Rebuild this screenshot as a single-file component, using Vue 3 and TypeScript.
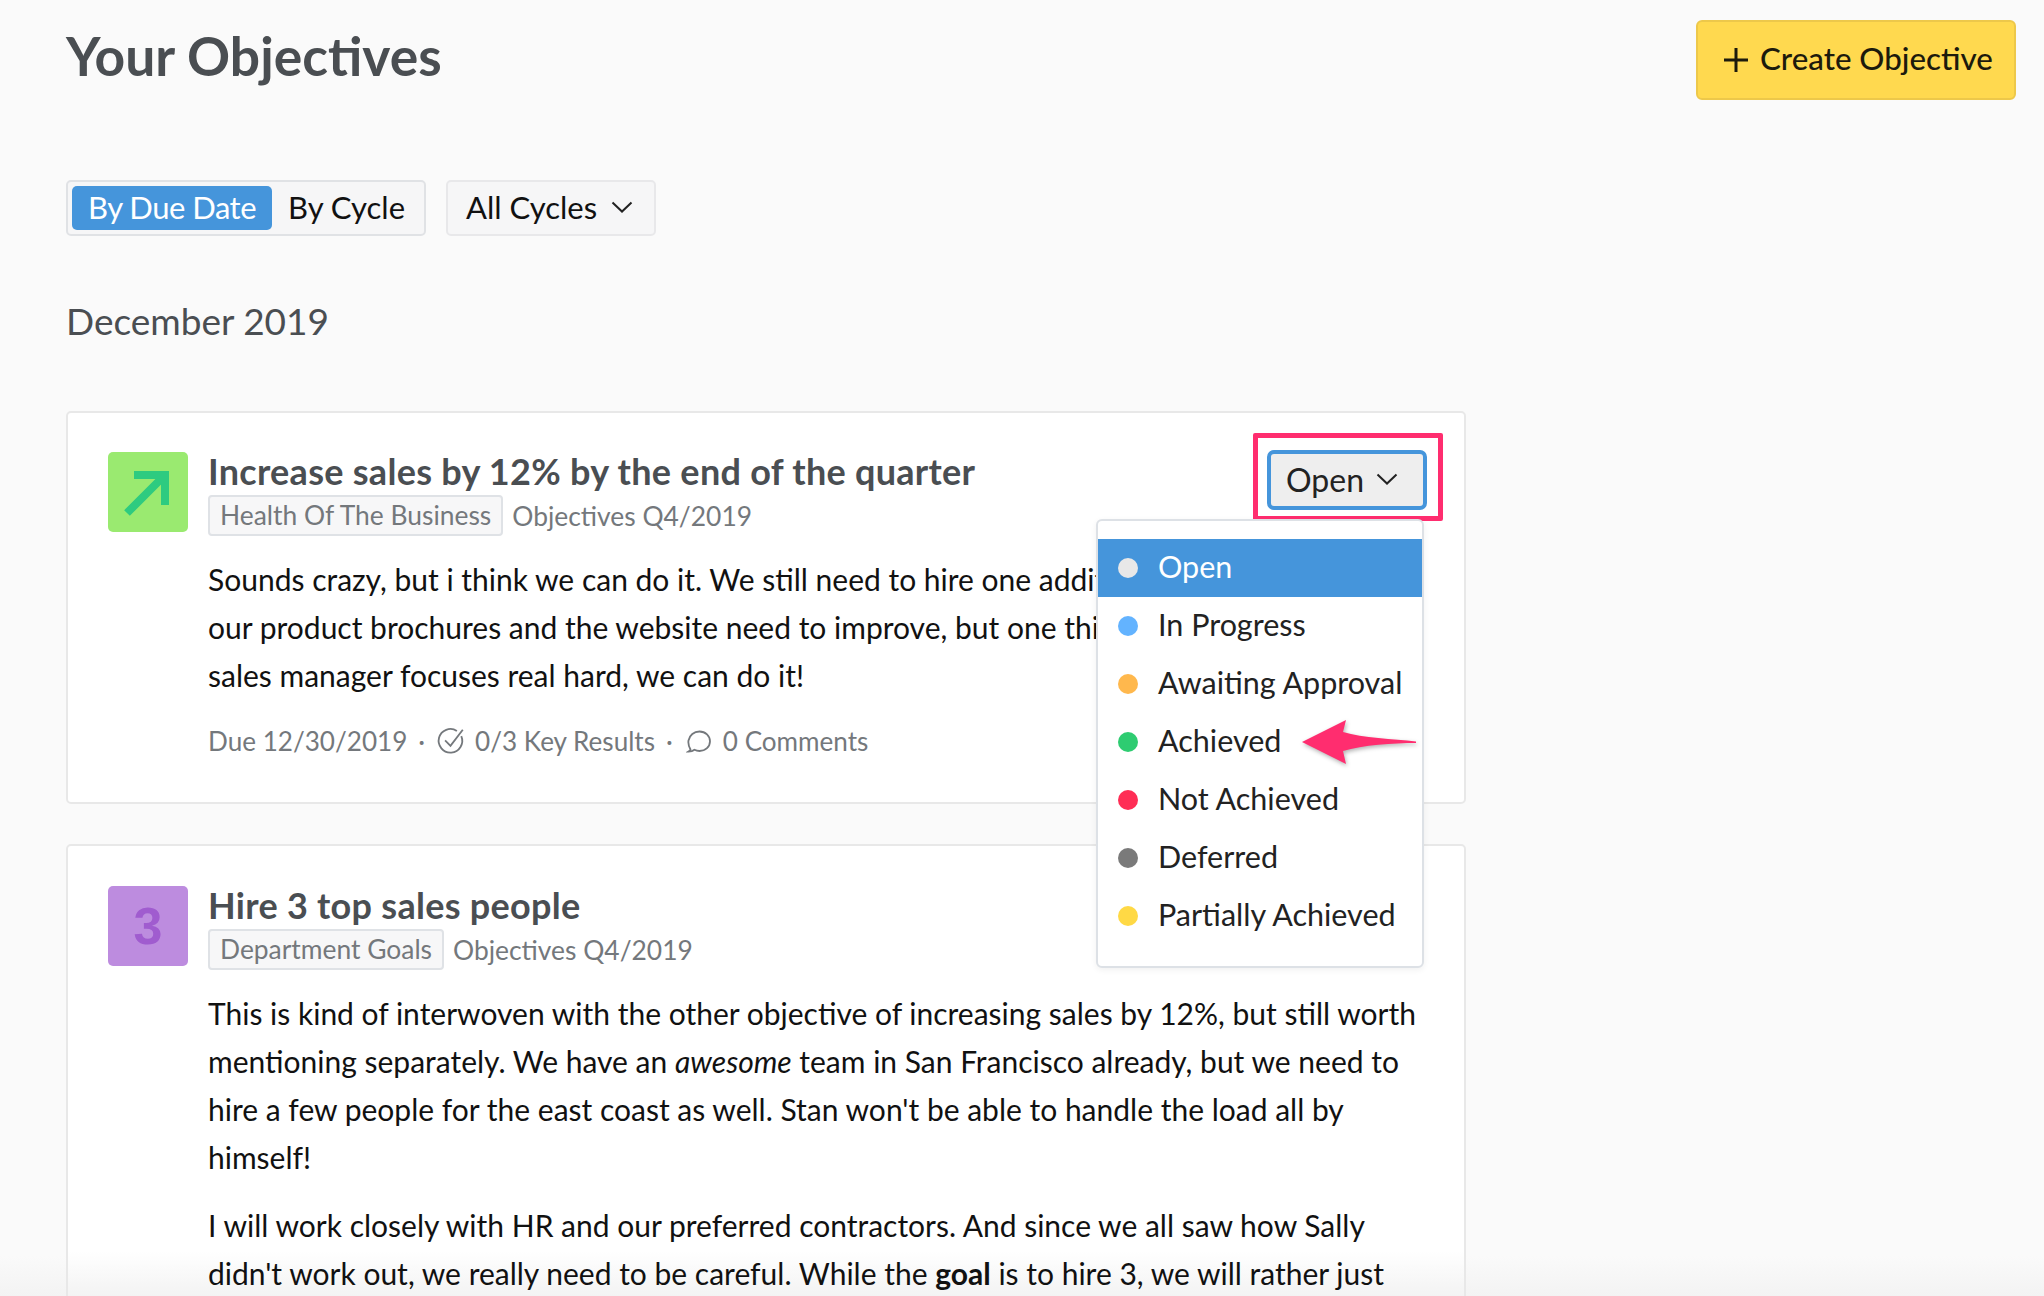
<script setup lang="ts">
const statuses = [
  { label: 'Open', color: '#e8e8e8', active: true },
  { label: 'In Progress', color: '#63b3ff', active: false },
  { label: 'Awaiting Approval', color: '#ffb84d', active: false },
  { label: 'Achieved', color: '#2ecc71', active: false },
  { label: 'Not Achieved', color: '#ff2d55', active: false },
  { label: 'Deferred', color: '#7a7a7a', active: false },
  { label: 'Partially Achieved', color: '#ffd945', active: false },
]
</script>

<template>
  <div class="page">
    <header class="top">
      <h1>Your Objectives</h1>
      <button class="create">
        <svg width="24" height="24" viewBox="0 0 24 24"><path d="M12 0v24M0 12h24" stroke="#1c1a0c" stroke-width="3" fill="none" /></svg>
        <span>Create Objective</span>
      </button>
    </header>

    <div class="filters">
      <div class="toggle">
        <span class="seg on">By Due Date</span>
        <span class="seg">By Cycle</span>
      </div>
      <div class="cycles">
        <span>All Cycles</span>
        <svg width="22" height="12" viewBox="0 0 22 12"><path d="M1.500 1.500L11 10.500L20.500 1.500" stroke="#222" stroke-width="2" fill="none" /></svg>
      </div>
    </div>

    <h2>December 2019</h2>

    <section class="card first">
      <div class="head">
        <div class="badge green">
          <svg width="80" height="80" viewBox="0 0 80 80"><path d="M26 23H57V53M57 23L19 61" stroke="#2ecb80" stroke-width="8" fill="none" /></svg>
        </div>
        <div class="heading">
          <h3>Increase sales by 12% by the end of the quarter</h3>
          <div class="tags"><span class="tag">Health Of The Business</span><span class="cycle">Objectives Q4/2019</span></div>
        </div>
      </div>
      <div class="content">
        <p class="body">Sounds crazy, but i think we can do it. We still need to hire one additional<br>our product brochures and the website need to improve, but one thing<br>sales manager focuses real hard, we can do it!</p>
        <div class="meta">
          <span>Due 12/30/2019</span><i>·</i>
          <svg class="check" width="30" height="30" viewBox="0 0 28 28" fill="none" stroke="#74787c" stroke-width="1.700"><path d="M23.600 9.500A11 11 0 1 1 19.500 4.600" /><path d="M8.500 13.500L13.500 18.500L25 3.500" /></svg>
          <span>0/3 Key Results</span><i class="wide">·</i>
          <svg class="bubble" width="26" height="26" viewBox="0 0 26 26" fill="none" stroke="#74787c" stroke-width="1.800"><path d="M4.500 21.500C2.500 18 2 15.500 2.500 12.500C3.500 7 8 3.500 13.500 3.500C19.500 3.500 24 8 24 13.300C24 18.800 19.500 23 13.500 23C11.500 23 10 22.600 8.500 21.800C7 23 4.800 23.600 2.500 23.600C3.500 23 4.200 22.300 4.500 21.500Z" /></svg>
          <span>0 Comments</span>
        </div>
      </div>

      <div class="open-btn">
        <span>Open</span>
        <svg width="22" height="12" viewBox="0 0 22 12"><path d="M1.500 1.500L11 10.500L20.500 1.500" stroke="#222" stroke-width="2" fill="none" /></svg>
      </div>
      <div class="open-mark"></div>
      <ul class="menu">
        <li v-for="s in statuses" :key="s.label" :class="{ on: s.active }">
          <b class="dot" :style="{ background: s.color }"></b><span>{{ s.label }}</span>
        </li>
      </ul>
      <svg class="pointer" width="118" height="48" viewBox="0 0 118 48">
        <path d="M1 23L45 1L42 13C62 19 92 20 115 22.500V24C92 24 62 26 42 32L45 45Z" fill="#ff2d6f" />
      </svg>
    </section>

    <section class="card">
      <div class="head">
        <div class="badge purple">3</div>
        <div class="heading">
          <h3>Hire 3 top sales people</h3>
          <div class="tags"><span class="tag">Department Goals</span><span class="cycle">Objectives Q4/2019</span></div>
        </div>
      </div>
      <div class="content">
        <p class="body">This is kind of interwoven with the other objective of increasing sales by 12%, but still worth<br>mentioning separately. We have an <em>awesome</em> team in San Francisco already, but we need to<br>hire a few people for the east coast as well. Stan won't be able to handle the load all by<br>himself!</p>
        <p class="body second">I will work closely with HR and our preferred contractors. And since we all saw how Sally<br>didn't work out, we really need to be careful. While the <strong>goal</strong> is to hire 3, we will rather just</p>
      </div>
    </section>
  </div>
</template>

<style>
html, body { margin: 0; background: #fafafa; overflow: hidden; }
</style>

<style scoped>
.page {
  position: relative;
  box-sizing: border-box;
  height: 1296px;
  overflow: hidden;
  padding: 20px 28px 0 66px;
  background: linear-gradient(#fafafa 1256px, #f3f3f3 1296px);
  font-family: Lato, "Open Sans", sans-serif;
  color: #111;
}
.top { display: flex; justify-content: space-between; align-items: flex-start; }
h1 { margin: 5px 0 0; font-size: 53.400px; line-height: 60px; font-weight: 700; color: #4a4e52; }
.create {
  display: flex; align-items: center; gap: 12px;
  box-sizing: border-box; width: 320px; height: 80px; padding: 0 0 5px 26px;
  background: #ffd94f; border: 2px solid #edc84a; border-radius: 6px;
  font: 500 31.300px Lato, sans-serif; color: #1c1a0c;
}
.create svg { margin-top: 5px; }
.filters { display: flex; gap: 20px; margin-top: 80px; font-size: 31px; white-space: nowrap; }
.toggle, .cycles {
  box-sizing: border-box; height: 56px; display: flex; align-items: center;
  background: #f6f6f7; border: 2px solid #e0e2e5; border-radius: 5px;
}
.toggle { width: 360px; padding: 0 4px; }
.seg { display: flex; align-items: center; height: 44px; padding: 0 16px 2px; box-sizing: border-box; }
.seg.on { width: 200px; background: #4595db; color: #fff; border-radius: 5px; letter-spacing: -.5px; }
.cycles { width: 210px; padding: 0 0 2px 18px; gap: 14px; border-color: #e8e8ea; }
h2 { margin: 63px 0 0; font-size: 37px; line-height: 44px; font-weight: 400; color: #4a4e52; }
.card {
  position: relative; box-sizing: border-box; width: 1400px; padding: 39px 40px 40px 40px;
  background: #fff; border: 2px solid #e8e8e8; border-radius: 5px; margin-bottom: 40px;
}
.card:last-child {
  height: 600px;
  padding-top: 40px;
  background: linear-gradient(#fff 405px, #f3f3f3 450px);
}
.first { margin-top: 68px; height: 393px; }
.head { display: flex; gap: 20px; }
.badge { width: 80px; height: 80px; flex: none; border-radius: 5px; }
.green { background: #9aea70; }
.purple {
  display: flex; align-items: center; justify-content: center;
  background: #bd8cdf; color: #a05ccf;
  font: 700 52px "Liberation Sans", sans-serif;
}
h3 { margin: -1px 0 0; font-size: 36px; line-height: 40px; font-weight: 700; letter-spacing: .28px; color: #4a4e52; }
.tags { display: flex; align-items: center; gap: 9px; margin-top: 4px; font-size: 26.400px; color: #74787c; }
.tag {
  display: block; box-sizing: border-box; height: 41px; line-height: 37px; padding: 0 10px;
  background: #f7f7f8; border: 2px solid #dfe2e6; border-radius: 4px;
}
.content { padding-left: 100px; }
.body { margin: 19px 0 0; font-size: 30px; line-height: 48px; color: #111; white-space: nowrap; }
.second { margin-top: 20px; }
.meta { display: flex; align-items: center; margin-top: 25px; font-size: 26.100px; line-height: 34px; color: #74787c; white-space: nowrap; }
.meta i { font-style: normal; margin: 0 11px; }
.meta i.wide { margin-right: 13px; }
.meta svg { margin-right: 9px; }
.meta .bubble { margin-right: 11px; }
.open-btn {
  position: absolute; left: 1199px; top: 37px; box-sizing: border-box; width: 160px; height: 60px;
  display: flex; align-items: center; gap: 12px; padding: 0 0 2px 15px;
  background: #eee; border: 4px solid #4595db; border-radius: 7px; font-size: 32px; color: #222;
}
.open-mark {
  position: absolute; left: 1185px; top: 20px; box-sizing: border-box; width: 190px; height: 88px;
  border: 5px solid #ff2d6f; border-radius: 2px;
}
.menu {
  position: absolute; left: 1028px; top: 106px; box-sizing: border-box; width: 328px; height: 449px;
  margin: 0; padding: 18px 0; list-style: none; z-index: 2;
  background: #fff; border: 2px solid #dde1e6; border-radius: 6px;
  box-shadow: 0 2px 6px rgba(0, 0, 0, .06); font-size: 30.500px; color: #222; white-space: nowrap;
}
.menu li { display: flex; align-items: center; height: 58px; padding-left: 20px; }
.menu li span { margin-bottom: 5px; }
.menu li.on { background: #4595db; color: #fff; }
.dot { width: 20px; height: 20px; border-radius: 50%; margin-right: 20px; flex: none; }
.pointer {
  position: absolute; left: 1233px; top: 306px; z-index: 3;
  filter: drop-shadow(1px 2px 2px rgba(0, 0, 0, .3));
}
</style>
